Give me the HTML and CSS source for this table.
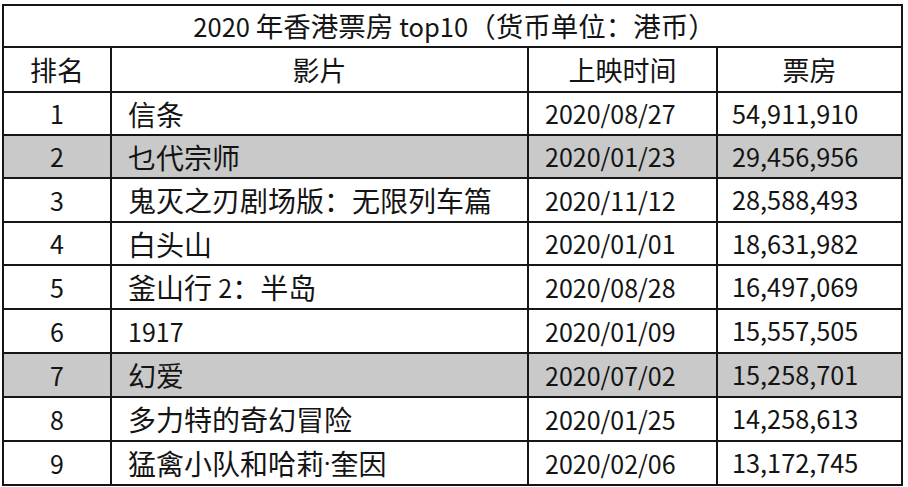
FILE: index.html
```html
<!DOCTYPE html>
<html lang="zh-CN">
<head>
<meta charset="utf-8">
<title>2020 年香港票房 top10</title>
<link rel="stylesheet" href="styles.css">
</head>
<body>
<div class="sheet">
  <div class="cell title"><span class="lat">2020 </span>年香港票房 <span class="lat">top10</span>（货币单位：港币）</div>
  <div class="row head">
    <div class="cell c">排名</div>
    <div class="cell c">影片</div>
    <div class="cell c">上映时间</div>
    <div class="cell c">票房</div>
  </div>
  <div class="row">
    <div class="cell c n">1</div><div class="cell film">信条</div><div class="cell date">2020/08/27</div><div class="cell num">54,911,910</div>
  </div>
  <div class="row alt">
    <div class="cell c n">2</div><div class="cell film">乜代宗师</div><div class="cell date">2020/01/23</div><div class="cell num">29,456,956</div>
  </div>
  <div class="row">
    <div class="cell c n">3</div><div class="cell film">鬼灭之刃剧场版：无限列车篇</div><div class="cell date">2020/11/12</div><div class="cell num">28,588,493</div>
  </div>
  <div class="row">
    <div class="cell c n">4</div><div class="cell film">白头山</div><div class="cell date">2020/01/01</div><div class="cell num">18,631,982</div>
  </div>
  <div class="row">
    <div class="cell c n">5</div><div class="cell film">釜山行 <span class="lat">2</span>：半岛</div><div class="cell date">2020/08/28</div><div class="cell num">16,497,069</div>
  </div>
  <div class="row">
    <div class="cell c n">6</div><div class="cell film"><span class="lat">1917</span></div><div class="cell date">2020/01/09</div><div class="cell num">15,557,505</div>
  </div>
  <div class="row alt">
    <div class="cell c n">7</div><div class="cell film">幻爱</div><div class="cell date">2020/07/02</div><div class="cell num">15,258,701</div>
  </div>
  <div class="row">
    <div class="cell c n">8</div><div class="cell film">多力特的奇幻冒险</div><div class="cell date">2020/01/25</div><div class="cell num">14,258,613</div>
  </div>
  <div class="row">
    <div class="cell c n">9</div><div class="cell film">猛禽小队和哈莉<span class="dot">·</span>奎因</div><div class="cell date">2020/02/06</div><div class="cell num">13,172,745</div>
  </div>
</div>
</body>
</html>
```
FILE: styles.css
```css
html, body {
  margin: 0;
  padding: 0;
  background: #ffffff;
}
body {
  padding: 4px 0 0 2px;
  height: 483px;
  overflow: hidden;
  font-family: "Noto Sans CJK SC", "Noto Sans", sans-serif;
  color: #141414;
}
.sheet {
  display: grid;
  grid-template-columns: 106px 415px 187px 183px;
  grid-template-rows: 40px 43px 41px 41px 42px 41px 42px 42px 42px 42px 42px;
  gap: 2px;
  padding: 2px;
  background: #161616;
  width: max-content;
}
.row {
  display: contents;
}
.cell {
  background: #ffffff;
  display: flex;
  align-items: center;
  font-size: 28px;
  line-height: 1;
  white-space: pre;
  overflow: hidden;
}
.row.alt .cell {
  background: #c9c9c9;
}
.title {
  grid-column: 1 / 5;
  justify-content: center;
  font-size: 27.5px;
  padding-left: 4px;
}
.title .lat {
  font-size: 25.5px;
}
.head .cell {
  font-size: 27px;
}
.c {
  justify-content: center;
}
.n {
  font-size: 25px;
}
.film {
  padding-left: 16px;
}
.film .lat {
  font-size: 25px;
}
.dot {
  font-family: "Noto Sans", sans-serif;
  font-size: 24px;
}
.date {
  padding-left: 16px;
  font-size: 25px;
}
.num {
  padding-left: 14px;
  font-size: 25.3px;
}
```
